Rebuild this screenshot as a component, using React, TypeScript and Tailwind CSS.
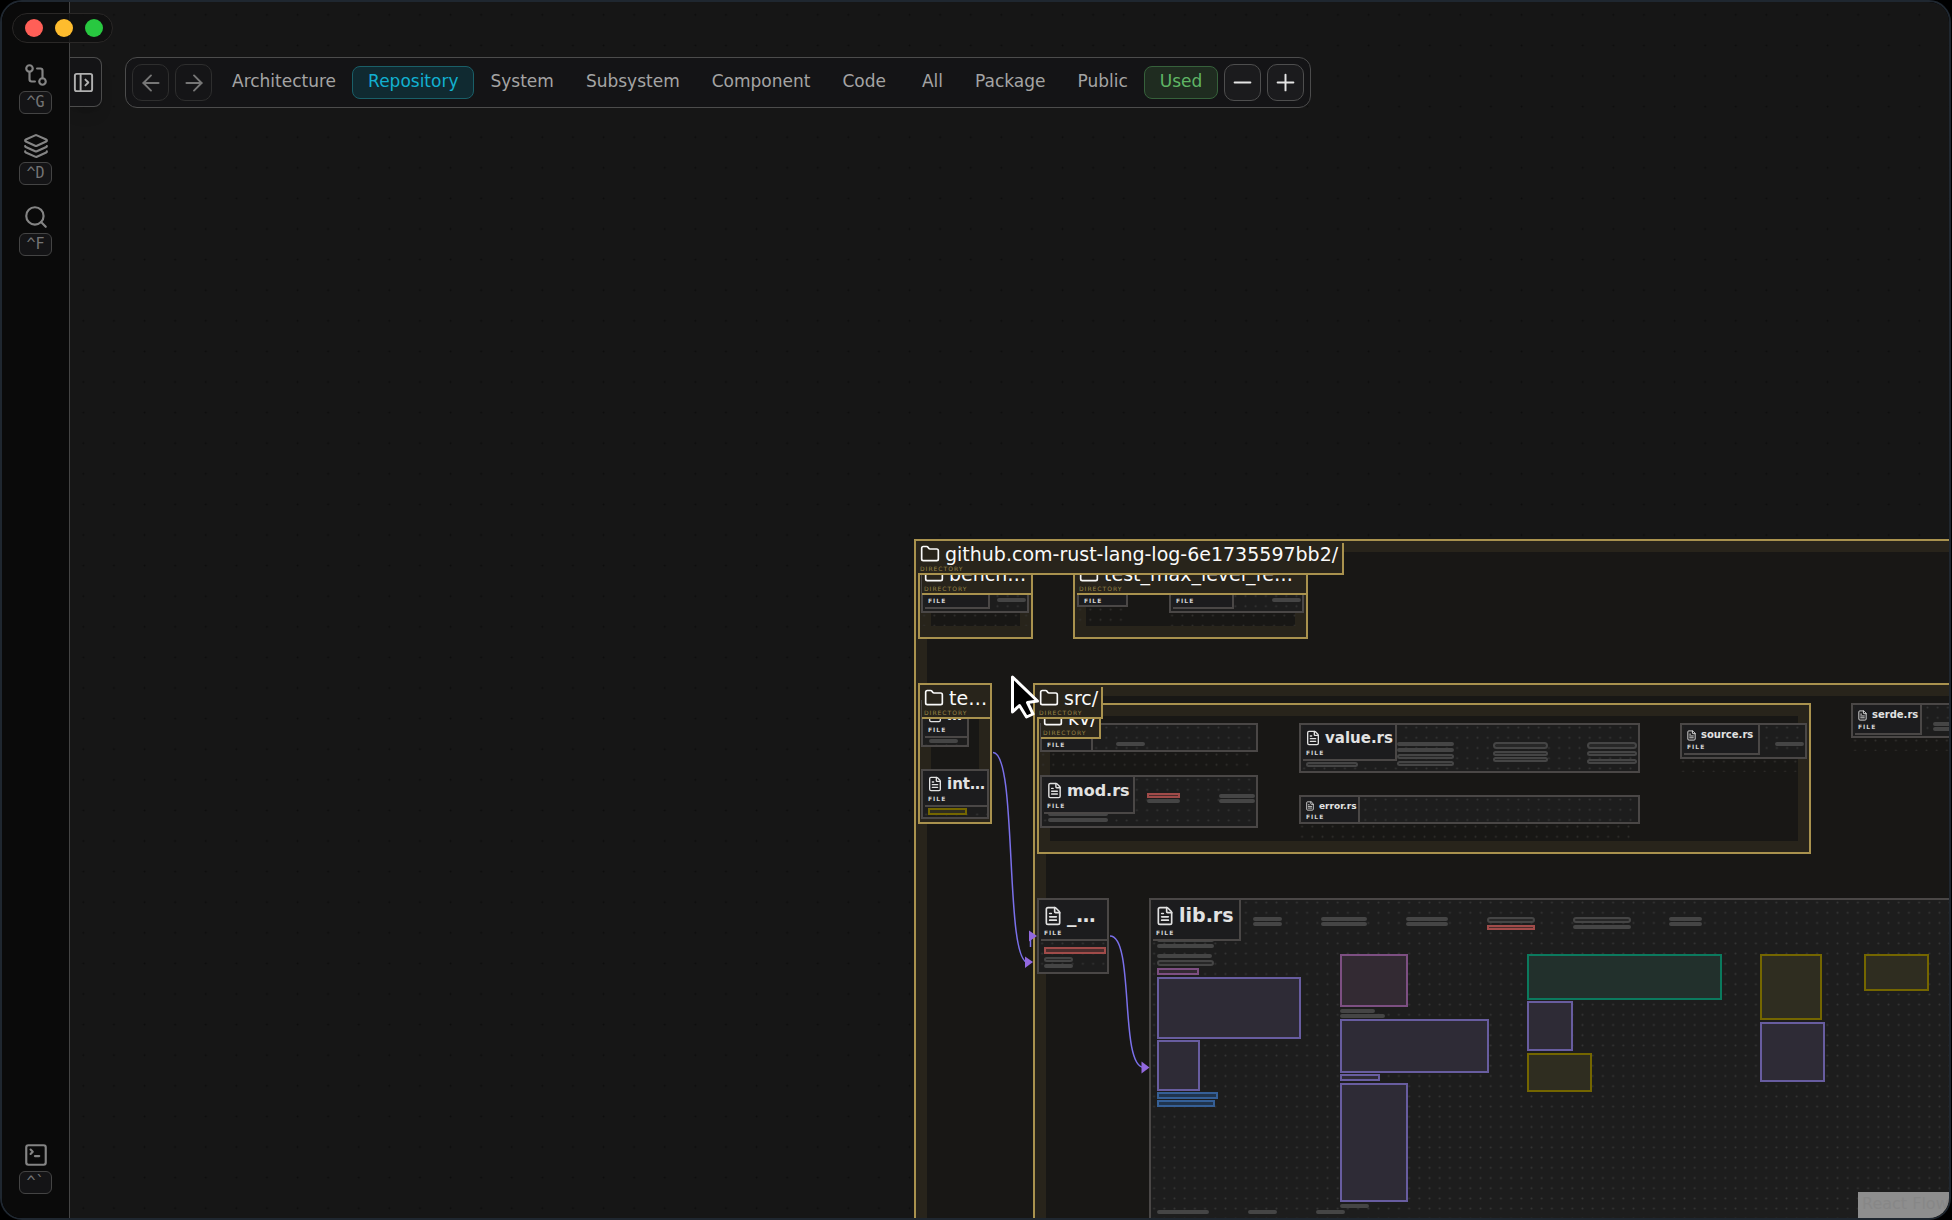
import type { ReactNode } from 'react';
import {
  ArrowLeft,
  ArrowRight,
  FileText,
  Folder,
  GitCompare,
  Layers,
  Minus,
  PanelLeftOpen,
  Plus,
  Search,
  SquareTerminal,
} from 'lucide-react';
import { clsx } from 'clsx';

// Where the canvas starts inside the window; node data is in window space.
const ORIGIN = { x: 70, y: 2 };

type Tone = 'gray' | 'bar' | 'red' | 'yellow' | 'purple' | 'pink' | 'teal' | 'blue';
type Rect = [number, number, number, number];
type Block = [number, number, number, number, Tone];

type FileNode = {
  name: string;
  rect: Rect;
  size: 9 | 10 | 15 | 16 | 19;
  header?: number;
  blocks: Block[];
};

type DirNode = {
  name: string;
  rect: Rect;
  header?: number;
  dots?: Rect[];
  files?: FileNode[];
  dirs?: DirNode[];
};

const toneClass: Record<Tone, string> = {
  gray: 'border-[#454545] bg-[#272727] rounded-sm',
  bar: 'border-[#454545] bg-[#3c3c3c] rounded-sm',
  red: 'border-[#a04b49] bg-[#4a2c2c]',
  yellow: 'border-[#746600] bg-[#2f2d20]',
  purple: 'border-[#685da0] bg-[#2e2b36]',
  pink: 'border-[#7d4f82] bg-[#332a33]',
  teal: 'border-[#0b7a5e] bg-[#22302c]',
  blue: 'border-[#355f96] bg-[#20344d]',
};

const nameClass = {
  9: 'text-[9px] leading-[10px]',
  10: 'text-[10px] leading-[12px]',
  15: 'text-[15px] leading-[18px]',
  16: 'text-[16px] leading-[19px]',
  19: 'text-[19px] leading-[23px]',
};

const root: DirNode = {
  name: 'github.com-rust-lang-log-6e1735597bb2/',
  rect: [914, 539, 1100, 760],
  header: 426,
  dirs: [
    {
      name: 'bench…',
      rect: [918, 559, 115, 80],
      dots: [[921, 613, 108, 13]],
      files: [
        { name: '', rect: [921, 571, 108, 42], size: 15, header: 65, blocks: [[997, 598, 29, 4, 'bar']] },
      ],
    },
    {
      name: 'test_max_level_fe…',
      rect: [1073, 559, 235, 80],
      dots: [[1077, 607, 51, 19], [1169, 613, 127, 13]],
      files: [
        { name: '', rect: [1077, 571, 51, 36], size: 15, header: 47, blocks: [] },
        { name: '', rect: [1169, 571, 135, 42], size: 15, header: 61, blocks: [[1272, 598, 29, 4, 'bar']] },
      ],
    },
    {
      name: 'te…',
      rect: [918, 683, 74, 141],
      files: [
        { name: '…', rect: [921, 700, 48, 47], size: 15, blocks: [[929, 739, 29, 4, 'bar']] },
        { name: 'int…', rect: [921, 769, 68, 50], size: 15, blocks: [[928, 808, 39, 7, 'yellow']] },
      ],
    },
    {
      name: 'src/',
      rect: [1033, 683, 980, 600],
      header: 66,
      dots: [[1852, 738, 97, 13]],
      files: [
        {
          name: 'serde.rs',
          rect: [1851, 703, 140, 35],
          size: 10,
          header: 67,
          blocks: [[1933, 722, 40, 4, 'bar'], [1933, 727, 40, 4, 'bar']],
        },
        {
          name: '_…',
          rect: [1037, 898, 72, 76],
          size: 19,
          blocks: [
            [1044, 947, 62, 7, 'red'],
            [1044, 957, 29, 5, 'gray'],
            [1044, 964, 29, 4, 'bar'],
          ],
        },
        {
          name: 'lib.rs',
          rect: [1149, 898, 860, 380],
          size: 19,
          header: 88,
          blocks: [
            [1253, 917, 29, 4, 'bar'], [1253, 922, 29, 4, 'bar'],
            [1321, 917, 46, 4, 'bar'], [1321, 922, 46, 4, 'bar'],
            [1406, 917, 42, 4, 'bar'], [1406, 922, 42, 4, 'bar'],
            [1487, 917, 48, 6, 'gray'], [1487, 925, 48, 5, 'red'],
            [1573, 917, 58, 6, 'gray'], [1573, 925, 58, 4, 'bar'],
            [1669, 917, 33, 4, 'bar'], [1669, 922, 33, 4, 'bar'],
            [1157, 938, 57, 4, 'bar'], [1157, 944, 57, 4, 'bar'],
            [1157, 954, 55, 4, 'bar'], [1157, 960, 57, 6, 'gray'],
            [1157, 968, 42, 7, 'pink'],
            [1157, 977, 144, 62, 'purple'],
            [1157, 1040, 43, 51, 'purple'],
            [1157, 1092, 61, 7, 'blue'], [1157, 1100, 58, 7, 'blue'],
            [1157, 1210, 52, 4, 'bar'], [1248, 1210, 29, 4, 'bar'], [1316, 1210, 29, 4, 'bar'],
            [1340, 954, 68, 53, 'pink'],
            [1340, 1009, 35, 4, 'bar'], [1340, 1014, 45, 4, 'bar'],
            [1340, 1019, 149, 54, 'purple'],
            [1340, 1074, 40, 7, 'purple'],
            [1340, 1083, 68, 119, 'purple'],
            [1340, 1204, 29, 4, 'bar'],
            [1527, 954, 195, 46, 'teal'],
            [1527, 1001, 46, 50, 'purple'],
            [1527, 1053, 65, 39, 'yellow'],
            [1760, 954, 62, 66, 'yellow'],
            [1760, 1022, 65, 60, 'purple'],
            [1864, 954, 65, 37, 'yellow'],
          ],
        },
      ],
      dirs: [
        {
          name: 'kv/',
          rect: [1037, 703, 774, 151],
          header: 60,
          dots: [[1040, 752, 214, 20], [1299, 824, 338, 17], [1680, 759, 118, 13]],
          files: [
            { name: '', rect: [1040, 723, 218, 29], size: 9, header: 49, blocks: [[1116, 742, 29, 4, 'bar']] },
            {
              name: 'mod.rs',
              rect: [1040, 775, 218, 53],
              size: 16,
              header: 91,
              blocks: [
                [1147, 793, 33, 5, 'red'], [1147, 799, 33, 4, 'bar'],
                [1219, 794, 36, 4, 'bar'], [1219, 799, 36, 4, 'bar'],
                [1048, 812, 60, 4, 'bar'], [1048, 818, 60, 4, 'bar'],
              ],
            },
            {
              name: 'value.rs',
              rect: [1299, 723, 341, 50],
              size: 15,
              header: 94,
              blocks: [
                [1397, 742, 57, 4, 'bar'], [1397, 748, 57, 4, 'bar'],
                [1397, 754, 57, 5, 'gray'], [1397, 761, 57, 5, 'gray'],
                [1493, 742, 55, 7, 'gray'], [1493, 751, 55, 5, 'gray'], [1493, 757, 55, 5, 'gray'],
                [1587, 742, 50, 7, 'gray'], [1587, 751, 50, 5, 'gray'], [1587, 759, 50, 5, 'gray'],
                [1306, 762, 52, 5, 'gray'],
              ],
            },
            { name: 'error.rs', rect: [1299, 795, 341, 29], size: 9, header: 57, blocks: [] },
            {
              name: 'source.rs',
              rect: [1680, 723, 127, 36],
              size: 10,
              header: 76,
              blocks: [[1775, 742, 29, 4, 'bar']],
            },
          ],
        },
      ],
    },
  ],
};

function place([x, y, width, height]: Rect, from = ORIGIN) {
  return { left: x - from.x, top: y - from.y, width, height };
}

function Dots({ id, gap, radius, className }: { id: string; gap: number; radius: number; className: string }) {
  return (
    <svg className={clsx('absolute inset-0 size-full', className)} aria-hidden="true">
      <pattern id={id} x="-2" y="-2.5" width={gap} height={gap} patternUnits="userSpaceOnUse">
        <circle cx={gap / 2} cy={gap / 2} r={radius} fill="currentColor" />
      </pattern>
      <rect width="100%" height="100%" fill={`url(#${id})`} />
    </svg>
  );
}

function FileCard({ file }: { file: FileNode }) {
  const { name, rect, size, header, blocks } = file;
  const inner = { x: rect[0] + 2, y: rect[1] + 2 };
  return (
    <div className="absolute overflow-hidden border-2 border-[#4a4746] bg-[#1d1d1d]" style={place(rect)}>
      <Dots id={`dots-${rect[0]}-${rect[1]}`} gap={10.2} radius={1} className="text-[#363636]" />
      {blocks.map(([x, y, w, h, tone]) => (
        <div key={`${x}-${y}`} className={clsx('absolute border-2', toneClass[tone])} style={place([x, y, w, h], inner)} />
      ))}
      <div
        className={clsx(
          'absolute left-0.5 top-0 border-b-2 border-[#4a4746] bg-[#1c1c1e] pl-0.5 pt-1 pb-[3px]',
          header ? 'border-r-2' : 'right-0'
        )}
        style={header ? { width: header } : undefined}
      >
        <div className={clsx('flex items-center gap-1 whitespace-nowrap font-bold text-[#e2e2e2]', nameClass[size])}>
          <FileText size={size + 1} className="shrink-0" />
          <span>{name || '\u00a0'}</span>
        </div>
        <div className="mt-[3px] pl-px text-[6px] leading-[6px] font-bold tracking-[1px] text-[#d4d4d4]">FILE</div>
      </div>
    </div>
  );
}

function Directory({ dir }: { dir: DirNode }) {
  const { name, rect, header, dots = [], files = [], dirs = [] } = dir;
  return (
    <>
      <div className="absolute border-2 border-[#a9924e] bg-[#28241b]" style={place(rect)}>
        <div className="absolute inset-[11px] bg-[#181715]" />
      </div>
      {dots.map((zone) => (
        <div key={zone.join('-')} className="absolute" style={place(zone)}>
          <Dots id={`zone-${zone[0]}-${zone[1]}`} gap={10.2} radius={1} className="text-[#32302d]" />
        </div>
      ))}
      {files.map((file) => (
        <FileCard key={file.rect.join('-')} file={file} />
      ))}
      {dirs.map((child) => (
        <Directory key={child.name} dir={child} />
      ))}
      <div
        className={clsx('absolute border-b-2 border-[#a9924e] bg-[#28241b] pl-0.5', header && 'border-r-2')}
        style={place([rect[0] + 4, rect[1] + 4, header ?? rect[2] - 6, 32])}
      >
        <div className="flex items-center gap-[5px] whitespace-nowrap text-[19px] leading-[22px] text-[#fafafa]">
          <Folder size={20} className="shrink-0" />
          <span>{name}</span>
        </div>
        <div className="text-[6px] leading-[7px] tracking-[1px] text-[#9a8647]">DIRECTORY</div>
      </div>
    </>
  );
}

function Edges() {
  return (
    <svg className="pointer-events-none absolute left-0 top-0 overflow-visible" width="1" height="1" aria-hidden="true">
      <g transform={`translate(${-ORIGIN.x} ${-ORIGIN.y})`} fill="none" stroke="#7a70ea" strokeWidth="1.5">
        <path d="M993 752.5 C1018 752.5 1004 962.5 1028 962.5" />
        <path d="M1030.500 947 V934" />
        <path d="M1110 936 C1135 936 1119 1067.500 1144 1067.500" />
        <g fill="#9268de" stroke="none">
          <path d="M1025 956.500 L1033 962 L1025 968 Z" />
          <path d="M1029 930.500 L1037 936 L1029 941.500 Z" />
          <path d="M1141.500 1061.500 L1149.500 1067.500 L1141.500 1073.500 Z" />
        </g>
      </g>
    </svg>
  );
}

function Pointer() {
  return (
    <svg className="pointer-events-none absolute left-0 top-0 overflow-visible" width="1" height="1" aria-hidden="true">
      <g transform={`translate(${-ORIGIN.x} ${-ORIGIN.y})`}>
        <path
          d="M1012.500 677 V712 L1019.500 705.500 L1026.500 717 L1033 714 L1027.500 702.500 L1037.500 701 Z"
          fill="#000"
          stroke="#fff"
          strokeWidth="3"
          strokeLinejoin="round"
        />
      </g>
    </svg>
  );
}

const sideItems = [
  { label: 'Compare', keys: '^G', icon: GitCompare },
  { label: 'Layers', keys: '^D', icon: Layers },
  { label: 'Search', keys: '^F', icon: Search },
  { label: 'Terminal', keys: '^`', icon: SquareTerminal },
];

function Sidebar() {
  return (
    <aside className="flex w-[68px] shrink-0 flex-col items-center gap-[19px] border-r border-[#444444] bg-[#0a0a0a] pt-[60px] pb-6">
      {sideItems.map((item) => {
        const Icon = item.icon;
        return (
          <button
            key={item.keys}
            type="button"
            aria-label={item.label}
            className="flex flex-col items-center gap-[3px] text-[#848484] last:mt-auto"
          >
            <Icon size={26} />
            <kbd className="h-[23px] w-[33px] rounded-md border border-[#444444] bg-[#141416] text-center font-['DejaVu_Sans_Mono',monospace] text-[15px] leading-[20px] text-[#757575]">
              {item.keys}
            </kbd>
          </button>
        );
      })}
    </aside>
  );
}

function IconButton({ label, dim, children }: { label: string; dim?: boolean; children: ReactNode }) {
  return (
    <button
      type="button"
      aria-label={label}
      className={clsx(
        'flex size-[37px] items-center justify-center rounded-[10px] border',
        dim ? 'border-[#2e2e2e] bg-[#151517] text-[#767676]' : 'border-[#4e4e4e] bg-[#1b1b1d] text-[#e5e5e5]'
      )}
    >
      {children}
    </button>
  );
}

function FilterGroup({ names }: { names: string[] }) {
  return (
    <div className="flex">
      {names.map((name) => (
        <button
          key={name}
          type="button"
          className={clsx(
            'h-[33px] rounded-lg border px-[15px] pb-0.5 text-[17px] leading-[27px]',
            name === 'Repository' && 'border-[#1a5f68] bg-[#102a31] text-[#12b0d0]',
            name === 'Used' && 'border-[#36613b] bg-[#1f2c20] text-[#5fb565]',
            name !== 'Repository' && name !== 'Used' && 'border-transparent text-[#a4a4a4]'
          )}
        >
          {name}
        </button>
      ))}
    </div>
  );
}

const levels = ['Architecture', 'Repository', 'System', 'Subsystem', 'Component', 'Code'];
const scopes = ['All', 'Package', 'Public', 'Used'];

function Toolbar() {
  return (
    <nav className="absolute left-[55px] top-[55px] flex h-[51px] items-center gap-1 rounded-xl border border-[#4c4c4c] bg-[#141416] px-1.5">
      <div className="flex gap-1.5">
        <IconButton label="Back" dim>
          <ArrowLeft size={26} strokeWidth={1.75} />
        </IconButton>
        <IconButton label="Forward" dim>
          <ArrowRight size={26} strokeWidth={1.75} />
        </IconButton>
      </div>
      <FilterGroup names={levels} />
      <FilterGroup names={scopes} />
      <div className="flex gap-1.5 pl-0.5">
        <IconButton label="Zoom out">
          <Minus size={27} strokeWidth={1.75} />
        </IconButton>
        <IconButton label="Zoom in">
          <Plus size={27} strokeWidth={1.75} />
        </IconButton>
      </div>
    </nav>
  );
}

export default function App() {
  return (
    <div className="h-screen bg-black pr-px font-['DejaVu_Sans',sans-serif]">
      <div className="relative flex h-full overflow-hidden rounded-[22px] border-2 border-[#1f2730]">
        <Sidebar />
        <main className="relative flex-1 overflow-hidden bg-[#161616]">
          <Dots id="canvas" gap={30.6} radius={1} className="text-[#0c0c0c]" />
          <Directory dir={root} />
          <Edges />
          <Toolbar />
          <button
            type="button"
            aria-label="Open panel"
            className="absolute left-0 top-[55px] flex h-[50px] w-8 items-center justify-center rounded-r-lg border border-l-0 border-[#4c4c4c] bg-[#141416] pr-1 text-[#b0b0b0] shadow-lg"
          >
            <PanelLeftOpen size={23} className="shrink-0" />
          </button>
          <a
            href="https://reactflow.dev"
            className="absolute right-0 bottom-0 h-[26px] w-[91px] overflow-hidden whitespace-nowrap bg-[#8e8e8e] pl-1 text-[16px] leading-[24px] text-[#878787]"
          >
            React Flow
          </a>
          <Pointer />
        </main>
        <div className="absolute left-[10px] top-[11px] flex h-[30px] w-[101px] items-center gap-3 rounded-full border border-[#2a2827] bg-[#0f0f0f]/80 pl-3">
          <button type="button" aria-label="Close" className="size-[18px] shrink-0 rounded-full bg-[#ff5f57]" />
          <button type="button" aria-label="Minimize" className="size-[18px] shrink-0 rounded-full bg-[#febc2e]" />
          <button type="button" aria-label="Maximize" className="size-[18px] shrink-0 rounded-full bg-[#28c840]" />
        </div>
      </div>
    </div>
  );
}
